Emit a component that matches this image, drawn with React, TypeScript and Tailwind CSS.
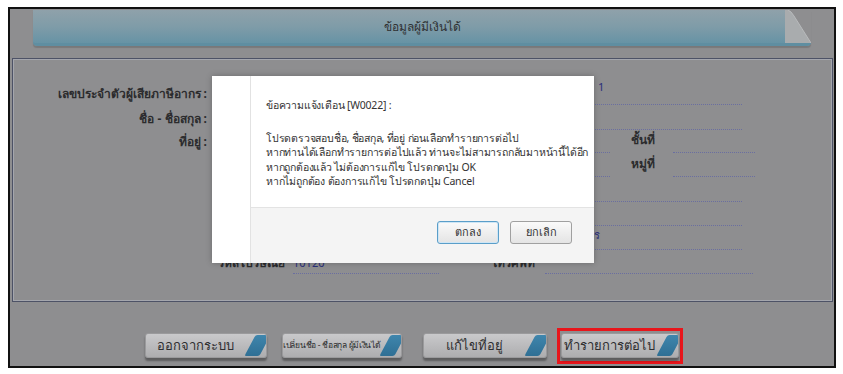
const FONT = "font-['Tahoma','Noto_Sans','DejaVu_Sans',sans-serif]";

function FieldLine({ className = '', children }: { className?: string; children?: React.ReactNode }) {
  return (
    <div className={`h-full border-b border-dotted border-[#6a6ea0] flex items-end pb-[2px] text-[11px] text-[#2a2f7a] ${className}`}>
      {children}
    </div>
  );
}

function Label({ children, className = '' }: { children: React.ReactNode; className?: string }) {
  return (
    <div className={`text-[12px] font-bold text-[#2b2b2d] leading-none pb-[5px] flex items-end whitespace-nowrap ${className}`}>{children}</div>
  );
}

function NavButton({ label, small = false, width }: { label: string; small?: boolean; width: string }) {
  return (
    <div
      className={`${width} h-[25px] flex items-center rounded-[3px] bg-gradient-to-b from-[#c9c9cb] to-[#adadaf] border border-[#9a9a9c] shadow-[0_3px_2px_rgba(0,0,0,0.35)] overflow-hidden`}
    >
      <div
        className={`flex-1 text-center text-[#2e2e30] leading-none whitespace-nowrap ${small ? 'text-[8.5px] tracking-[-0.3px]' : 'text-[13px]'}`}
      >
        {label}
      </div>
      <div className="w-[22px] h-full flex items-center justify-end pr-[1px]">
        <div className="w-[15px] h-[21px] bg-gradient-to-b from-[#3f86ad] to-[#2f6f94] skew-x-[-28deg] rounded-[2px]" />
      </div>
    </div>
  );
}

export default function App() {
  return (
    <div className={`relative w-[843px] h-[374px] bg-white pt-[7px] pl-[8px] ${FONT}`}>
      <div className="w-[828px] h-[361px] border-2 border-[#111] bg-[#8e8e90] flex flex-col">
        {/* header tab */}
        <div className="ml-[23px] mt-[1px] w-[778px] h-[36px] relative">
          <div className="h-full rounded-b-[4px] bg-gradient-to-b from-[#8fa1aa] via-[#7f9ca8] to-[#6793a5] border-b-[3px] border-[#5f8ea1] shadow-[0_2px_1px_rgba(0,0,0,0.15)] flex items-center justify-center">
            <span className="text-[12px] text-[#2f3133]">ข้อมูลผู้มีเงินได้</span>
          </div>
          <svg className="absolute right-0 top-0" width="26" height="33" viewBox="0 0 26 33">
            <rect x="0" y="0" width="26" height="33" fill="#8e8e90" />
            <path d="M0 0 L3 0 Q6 1 9 6 L26 33 L0 33 Z" fill="#a9acae" />
            <path d="M3 0 Q6 1 9 6 L26 33" fill="none" stroke="#b8babc" strokeWidth="1" />
          </svg>
        </div>

        {/* form panel */}
        <div className="ml-[2px] mt-[12px] w-[821px] h-[244px] border border-[#4d5266] shadow-[inset_0_0_0_1px_#a4a6ad] pt-[22px] flex flex-col">
          <div className="flex h-[24px]">
            <Label className="w-[194px] justify-end">เลขประจำตัวผู้เสียภาษีอากร :</Label>
            <FieldLine className="ml-[8px] w-[527px] pl-[383px] pb-[9px]">1</FieldLine>
          </div>
          <div className="flex h-[25px]">
            <Label className="w-[194px] justify-end">ชื่อ - ชื่อสกุล :</Label>
            <FieldLine className="ml-[8px] w-[527px]" />
          </div>
          <div className="flex h-[23px]">
            <Label className="w-[194px] justify-end">ที่อยู่ :</Label>
            <FieldLine className="ml-[8px] w-[395px]" />
            <Label className="ml-[21px] w-[42px] pb-[7px]">ชั้นที่</Label>
            <FieldLine className="w-[82px]" />
          </div>
          <div className="flex h-[24px]">
            <div className="w-[194px]" />
            <FieldLine className="ml-[8px] w-[395px]" />
            <Label className="ml-[21px] w-[42px] pb-[7px]">หมู่ที่</Label>
            <FieldLine className="w-[82px]" />
          </div>
          <div className="flex h-[25px]">
            <div className="w-[194px]" />
            <FieldLine className="ml-[8px] w-[527px]" />
          </div>
          <div className="flex h-[24px]">
            <div className="w-[194px]" />
            <FieldLine className="ml-[8px] w-[527px]" />
          </div>
          <div className="flex h-[24px]">
            <div className="w-[194px]" />
            <FieldLine className="ml-[8px] w-[527px] justify-end pr-[142px] pb-[6px]">กรุงเทพมหานคร</FieldLine>
          </div>
          <div className="flex h-[24px]">
            <Label className="w-[272px] justify-end">รหัสไปรษณีย์</Label>
            <div className="ml-[8px] w-[146px] flex flex-col">
              <div className="text-[11px] text-[#2a2f7a] leading-none pt-[7px]">10120</div>
              <div className="mt-auto border-b border-dotted border-[#6a6ea0]" />
            </div>
            <Label className="ml-[52px] w-[54px]">โทรศัพท์</Label>
            <FieldLine className="w-[208px]" />
          </div>
        </div>

        {/* nav buttons */}
        <div className="mt-[25px] h-[37px] flex items-center pl-[135px]">
          <NavButton label="ออกจากระบบ" width="w-[122px]" />
          <div className="ml-[15px]">
            <NavButton label="เปลี่ยนชื่อ - ชื่อสกุล ผู้มีเงินได้" small width="w-[120px]" />
          </div>
          <div className="ml-[21px]">
            <NavButton label="แก้ไขที่อยู่" width="w-[124px]" />
          </div>
          <div className="ml-[10px] w-[126px] h-[36px] border-[3px] border-[#e8151b] flex items-center justify-center">
            <NavButton label="ทำรายการต่อไป" width="w-[118px]" />
          </div>
        </div>
      </div>

      {/* confirm dialog */}
      <div className="absolute left-[212px] top-[76px] w-[382px] h-[187px] bg-white flex shadow-[0_0_6px_rgba(0,0,0,0.25)]">
        <div className="w-[38px] h-full bg-white" />
        <div className="flex-1 h-full border-l border-[#e2e2e2] flex flex-col">
          <div className="flex-1 pl-[15px] pt-[22px] text-[10.5px] text-[#333] leading-[14.5px] whitespace-nowrap tracking-[-0.2px]">
            <div>ข้อความแจ้งเตือน [W0022] :</div>
            <div className="mt-[18px]">
              <div>โปรดตรวจสอบชื่อ, ชื่อสกุล, ที่อยู่ ก่อนเลือกทำรายการต่อไป</div>
              <div>หากท่านได้เลือกทำรายการต่อไปแล้ว ท่านจะไม่สามารถกลับมาหน้านี้ได้อีก</div>
              <div>หากถูกต้องแล้ว ไม่ต้องการแก้ไข โปรดกดปุ่ม OK</div>
              <div>หากไม่ถูกต้อง ต้องการแก้ไข โปรดกดปุ่ม Cancel</div>
            </div>
          </div>
          <div className="h-[56px] bg-[#f4f4f4] border-t border-[#e3e3e3] flex items-center justify-end gap-[11px] pr-[22px] pb-[6px]">
            <button className="w-[62px] h-[23px] rounded-[3px] border border-[#5a9ec9] bg-gradient-to-b from-[#fafafa] to-[#e4e4e4] shadow-[inset_0_0_0_1px_#cfe6f5] text-[11px] text-[#333]">
              ตกลง
            </button>
            <button className="w-[62px] h-[23px] rounded-[3px] border border-[#a0a0a0] bg-gradient-to-b from-[#fafafa] to-[#e4e4e4] text-[11px] text-[#333]">
              ยกเลิก
            </button>
          </div>
        </div>
      </div>
    </div>
  );
}
